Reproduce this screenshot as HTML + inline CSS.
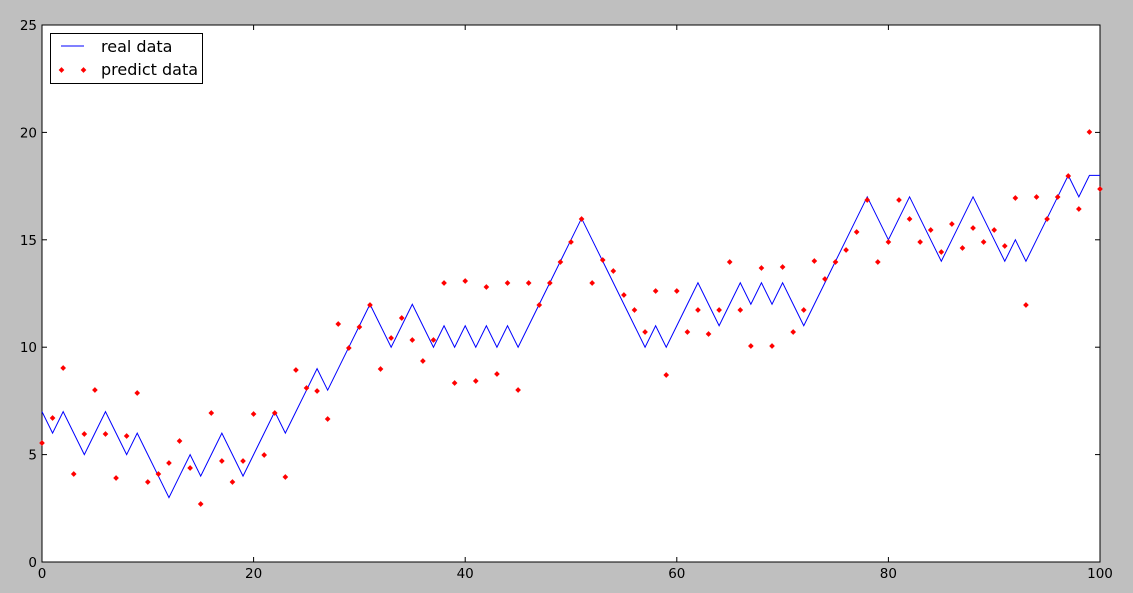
<!DOCTYPE html>
<html><head><meta charset="utf-8"><style>
html,body{margin:0;padding:0;background:#bfbfbf;width:1133px;height:593px;overflow:hidden}
svg{display:block}
text{font-family:"DejaVu Sans","Liberation Sans",sans-serif;font-size:13.5px;fill:#000}
</style></head><body>
<svg id="s" width="1133" height="593" xmlns="http://www.w3.org/2000/svg">
<rect x="42" y="25" width="1058" height="537" fill="#fff" stroke="#000" stroke-width="1"/>
<g id="ticks" stroke="#000" stroke-width="1"></g>
<polyline id="real" fill="none" stroke="#0000ff" stroke-width="1"/>
<g id="pts" fill="#ff0000"></g>
<g text-anchor="middle">
<text x="42" y="578">0</text><text x="253.6" y="578">20</text><text x="465.2" y="578">40</text>
<text x="676.8" y="578">60</text><text x="888.4" y="578">80</text><text x="1100" y="578">100</text>
</g>
<g text-anchor="end">
<text x="37" y="567">0</text><text x="37" y="459.6">5</text><text x="37" y="352.2">10</text>
<text x="37" y="244.8">15</text><text x="37" y="137.4">20</text><text x="37" y="30">25</text>
</g>
<rect x="50.5" y="33.5" width="152" height="50" fill="#fff" stroke="#000"/>
<line x1="61" y1="46" x2="84" y2="46" stroke="#0000ff"/>
<rect x="59.5" y="68" width="4" height="4" fill="#f00" transform="rotate(45 61.5 70)"/>
<rect x="81.5" y="68" width="4" height="4" fill="#f00" transform="rotate(45 83.5 70)"/>
<text x="101" y="52" style="font-size:16px">real data</text>
<text x="101" y="75" style="font-size:16px">predict data</text>
</svg>
<script>
var real=[7,6,7,6,5,6,7,6,5,6,5,4,3,4,5,4,5,6,5,4,5,6,7,6,7,8,9,8,9,10,11,12,11,10,11,12,11,10,11,10,11,10,11,10,11,10,11,12,13,14,15,16,15,14,13,12,11,10,11,10,11,12,13,12,11,12,13,12,13,12,13,12,11,12,13,14,15,16,17,16,15,16,17,16,15,14,15,16,17,16,15,14,15,14,15,16,17,18,17,18,18];
var py=[443,418,368,474,434,390,434,478,436,393,482,474,463,441,468,504,413,461,482,461,414,455,413,477,370,388,391,419,324,348,327,305,369,338,318,340,361,340,283,383,281,381,287,374,283,390,283,305,283,262,242,219,283,260,271,295,310,332,291,375,291,332,310,334,310,262,310,346,268,346,267,332,310,261,279,262,250,232,200,262,242,200,219,242,230,252,224,248,228,242,230,246,198,305,197,219,197,176,209,132,189];
function X(i){return 42+i*10.58}
function Y(v){return 562-v*21.48}
var p=[];for(var i=0;i<real.length;i++)p.push(X(i)+","+Y(real[i]));
document.getElementById('real').setAttribute('points',p.join(' '));
var ns="http://www.w3.org/2000/svg",g=document.getElementById('pts');
py.forEach(function(y,i){var r=document.createElementNS(ns,'rect');var x=X(i);
r.setAttribute('x',x-2);r.setAttribute('y',y-2);r.setAttribute('width',4);r.setAttribute('height',4);
r.setAttribute('transform','rotate(45 '+x+' '+y+')');g.appendChild(r);});
var t=document.getElementById('ticks');
function L(a,b,c,d){var l=document.createElementNS(ns,'line');l.setAttribute('x1',a);l.setAttribute('y1',b);l.setAttribute('x2',c);l.setAttribute('y2',d);t.appendChild(l);}
for(var k=0;k<=100;k+=20){var x=X(k);L(x,562,x,557);L(x,25,x,30);}
for(var v=0;v<=25;v+=5){var y=Y(v);L(42,y,47,y);L(1100,y,1095,y);}
</script>
</body></html>
